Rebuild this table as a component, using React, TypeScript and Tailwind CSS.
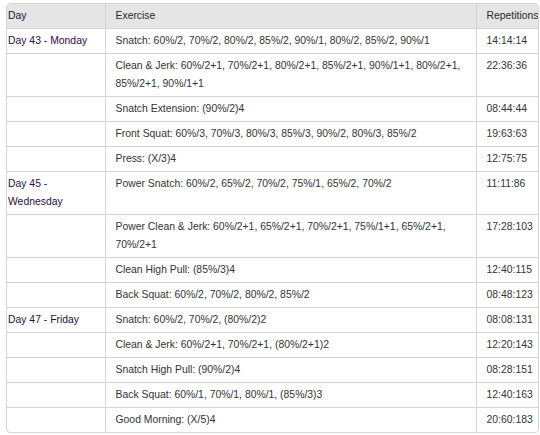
type Row = {
  day: string;
  exercise: string;
  reps: string;
};

const rows: Row[] = [
  { day: "Day 43 - Monday", exercise: "Snatch: 60%/2, 70%/2, 80%/2, 85%/2, 90%/1, 80%/2, 85%/2, 90%/1", reps: "14:14:14" },
  { day: "", exercise: "Clean & Jerk: 60%/2+1, 70%/2+1, 80%/2+1, 85%/2+1, 90%/1+1, 80%/2+1, 85%/2+1, 90%/1+1", reps: "22:36:36" },
  { day: "", exercise: "Snatch Extension: (90%/2)4", reps: "08:44:44" },
  { day: "", exercise: "Front Squat: 60%/3, 70%/3, 80%/3, 85%/3, 90%/2, 80%/3, 85%/2", reps: "19:63:63" },
  { day: "", exercise: "Press: (X/3)4", reps: "12:75:75" },
  { day: "Day 45 - Wednesday", exercise: "Power Snatch: 60%/2, 65%/2, 70%/2, 75%/1, 65%/2, 70%/2", reps: "11:11:86" },
  { day: "", exercise: "Power Clean & Jerk: 60%/2+1, 65%/2+1, 70%/2+1, 75%/1+1, 65%/2+1, 70%/2+1", reps: "17:28:103" },
  { day: "", exercise: "Clean High Pull: (85%/3)4", reps: "12:40:115" },
  { day: "", exercise: "Back Squat: 60%/2, 70%/2, 80%/2, 85%/2", reps: "08:48:123" },
  { day: "Day 47 - Friday", exercise: "Snatch: 60%/2, 70%/2, (80%/2)2", reps: "08:08:131" },
  { day: "", exercise: "Clean & Jerk: 60%/2+1, 70%/2+1, (80%/2+1)2", reps: "12:20:143" },
  { day: "", exercise: "Snatch High Pull: (90%/2)4", reps: "08:28:151" },
  { day: "", exercise: "Back Squat: 60%/1, 70%/1, 80%/1, (85%/3)3", reps: "12:40:163" },
  { day: "", exercise: "Good Morning: (X/5)4", reps: "20:60:183" },
];

export default function App() {
  return (
    <div className="w-[540px] h-[435px] bg-white pl-[6px] pt-[3px] font-['Liberation_Sans',Arial,sans-serif] text-[10.4px] leading-[18px]">
      <div className="w-[533px] border border-[#d4d4d4] rounded-[4px] overflow-hidden">
        <table className="w-full table-fixed border-collapse">
          <colgroup>
            <col className="w-[98px]" />
            <col className="w-[371px]" />
            <col />
          </colgroup>
          <thead>
            <tr className="bg-[#e5e5e5] text-left">
              <th className="font-normal pl-[1px] py-[3px] text-[#2e0a3c] border-r border-[#d4d4d4]">Day</th>
              <th className="font-normal pl-[10px] py-[3px] text-[#2a2a2a] border-r border-[#d4d4d4]">Exercise</th>
              <th className="font-normal pl-[10px] pr-0 py-[3px] text-[#2a2a2a] whitespace-nowrap">Repetitions</th>
            </tr>
          </thead>
          <tbody>
            {rows.map((r, i) => (
              <tr key={i} className="border-t border-[#d4d4d4] align-top">
                <td className="pl-[1px] pr-2 py-[3px] text-[#2e0a3c] border-r border-[#d4d4d4]">{r.day}</td>
                <td className="pl-[10px] pr-[10px] py-[3px] text-[#333] border-r border-[#d4d4d4]">{r.exercise}</td>
                <td className="pl-[10px] py-[3px] text-[#333] whitespace-nowrap">{r.reps}</td>
              </tr>
            ))}
          </tbody>
        </table>
      </div>
    </div>
  );
}
